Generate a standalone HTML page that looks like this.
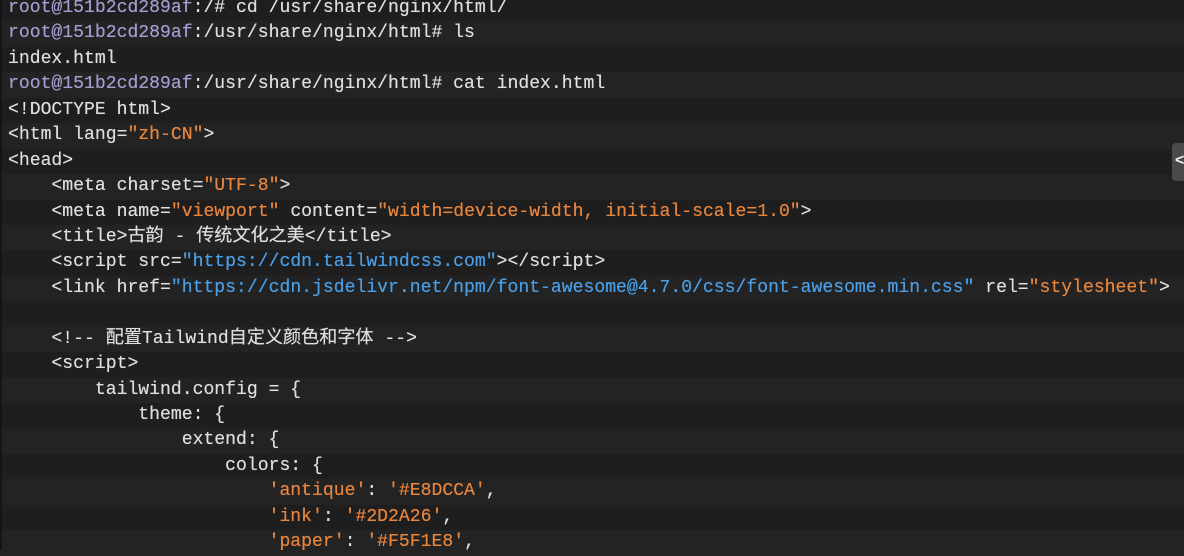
<!DOCTYPE html>
<html><head><meta charset="utf-8"><style>
html,body{margin:0;padding:0;background:#1e1e1e;width:1184px;height:550px;overflow:hidden}
.t{position:absolute;left:0;top:-4px;width:1184px;font-family:"Liberation Mono","Noto Sans CJK SC",monospace;font-size:18.1px;color:#dedede;text-shadow:0 0 0.4px currentColor}
.l{height:25.45px;line-height:25.45px;white-space:pre;padding-left:8px}
.l:nth-child(even){background:#232323}
.p{color:#a49cd0}.s{color:#e8853c}.u{color:#4a9ee6}
.b{position:absolute;left:1172px;top:143px;width:16px;height:38px;background:#4a4a4a;border-radius:4px;color:#eee;font:bold 16px "Liberation Sans",sans-serif;line-height:36px;padding-left:3px;box-sizing:border-box}
.edge{position:absolute;left:0;top:0;width:2px;height:550px;background:#151515}
</style></head><body>
<div class="t">
<div class="l"><span class="p">root@151b2cd289af</span>:/# cd /usr/share/nginx/html/</div>
<div class="l"><span class="p">root@151b2cd289af</span>:/usr/share/nginx/html# ls</div>
<div class="l">index.html</div>
<div class="l"><span class="p">root@151b2cd289af</span>:/usr/share/nginx/html# cat index.html</div>
<div class="l">&lt;!DOCTYPE html&gt;</div>
<div class="l">&lt;html lang=<span class="s">"zh-CN"</span>&gt;</div>
<div class="l">&lt;head&gt;</div>
<div class="l">    &lt;meta charset=<span class="s">"UTF-8"</span>&gt;</div>
<div class="l">    &lt;meta name=<span class="s">"viewport"</span> content=<span class="s">"width=device-width, initial-scale=1.0"</span>&gt;</div>
<div class="l">    &lt;title&gt;古韵 - 传统文化之美&lt;/title&gt;</div>
<div class="l">    &lt;script src=<span class="u">"https://cdn.tailwindcss.com"</span>&gt;&lt;/script&gt;</div>
<div class="l">    &lt;link href=<span class="u">"https://cdn.jsdelivr.net/npm/font-awesome@4.7.0/css/font-awesome.min.css"</span> rel=<span class="s">"stylesheet"</span>&gt;</div>
<div class="l"> </div>
<div class="l">    &lt;!-- 配置Tailwind自定义颜色和字体 --&gt;</div>
<div class="l">    &lt;script&gt;</div>
<div class="l">        tailwind.config = {</div>
<div class="l">            theme: {</div>
<div class="l">                extend: {</div>
<div class="l">                    colors: {</div>
<div class="l">                        <span class="s">'antique'</span>: <span class="s">'#E8DCCA'</span>,</div>
<div class="l">                        <span class="s">'ink'</span>: <span class="s">'#2D2A26'</span>,</div>
<div class="l">                        <span class="s">'paper'</span>: <span class="s">'#F5F1E8'</span>,</div>
</div>
<div class="edge"></div>
<div class="b">&lt;</div>
</body></html>
